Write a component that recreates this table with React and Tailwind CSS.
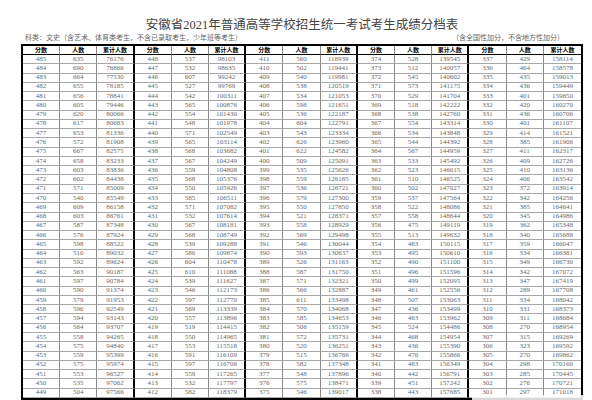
import React from "react";

// counts per score, from 485 down to 301 (5 blocks of 37 rows)
const counts = [
  635, 690, 664, 655, 656, 605, 620, 617, 653, 572, 667, 658, 603, 602, 571, 540, 609, 603, 587, 576, 598, 510, 592, 563, 597, 590, 579, 596, 594, 564, 558, 575, 559, 575, 553, 535, 504,
  537, 532, 607, 527, 542, 565, 554, 548, 571, 565, 568, 567, 559, 568, 550, 585, 571, 532, 567, 568, 539, 586, 604, 610, 539, 546, 597, 569, 557, 519, 550, 553, 591, 597, 559, 532, 582,
  560, 502, 540, 538, 534, 598, 536, 604, 543, 626, 622, 509, 535, 559, 536, 579, 550, 521, 558, 569, 546, 593, 526, 587, 571, 566, 611, 570, 585, 506, 572, 520, 515, 582, 548, 575, 546,
  528, 512, 545, 573, 529, 518, 538, 554, 534, 544, 567, 533, 523, 510, 502, 537, 522, 558, 475, 513, 483, 495, 490, 496, 499, 461, 507, 436, 463, 524, 468, 436, 476, 483, 442, 451, 443,
  429, 464, 435, 436, 401, 420, 436, 401, 414, 385, 411, 409, 410, 406, 372, 342, 385, 345, 362, 340, 359, 334, 349, 342, 347, 289, 334, 331, 311, 270, 315, 323, 270, 298, 285, 276, 297,
];

const ROWS = 37;
const cumulative = [];
counts.reduce((sum, c, i) => {
  cumulative[i] = sum + c;
  return sum + c;
}, 75541);

const headers = ["分数", "人数", "累计人数"];

const Cell = ({ col, children, head }) => {
  const edge =
    col === 14
      ? ""
      : col % 3 === 2
      ? "border-r-2 border-r-black"
      : "border-r border-r-[#8a8a8a]";
  return (
    <div
      className={`${edge} ${
        head ? "border-b border-b-black font-bold text-black" : "border-b border-b-[#a8a8a8] text-[#6a6a6a]"
      } flex items-center justify-center leading-none`}
    >
      {children}
    </div>
  );
};

export default function App() {
  return (
    <div className="relative w-[592px] h-[400px] bg-white overflow-hidden font-['Liberation_Serif','Noto_Sans_CJK_SC',serif]">
      <div className="pt-[17px] pl-[12px] h-[33px] text-center text-[12.5px] leading-[16px] text-[#444]">
        安徽省2021年普通高等学校招生统一考试考生成绩分档表
      </div>
      <div className="flex justify-between pl-[25px] pr-[28px] h-[11px] text-[7px] leading-[9px] text-[#666] font-['Noto_Sans_CJK_SC',sans-serif]">
        <span>科类：文史（含艺术、体育类考生，不含已录取考生，少年班等考生）</span>
        <span>（含全国性加分，不含地方性加分）</span>
      </div>

      <div className="ml-[21px] w-[562px] border-2 border-black">
        <div className="grid grid-cols-[repeat(15,minmax(0,1fr))] h-[9px] text-[6px] font-['Noto_Sans_CJK_SC',sans-serif]">
          {Array.from({ length: 15 }).map((_, col) => (
            <Cell key={col} col={col} head>
              {headers[col % 3]}
            </Cell>
          ))}
        </div>
        {Array.from({ length: ROWS }).map((_, r) => (
          <div
            key={r}
            className="grid grid-cols-[repeat(15,minmax(0,1fr))] h-[9.27px] text-[7px]"
          >
            {[0, 1, 2, 3, 4].map((g) => {
              const i = g * ROWS + r;
              return [
                <Cell key={`${g}-s`} col={g * 3}>{485 - i}</Cell>,
                <Cell key={`${g}-c`} col={g * 3 + 1}>{counts[i]}</Cell>,
                <Cell key={`${g}-t`} col={g * 3 + 2}>{cumulative[i]}</Cell>,
              ];
            })}
          </div>
        ))}
      </div>

      {/* faint watermark strip over the bottom-right corner */}
      <div className="absolute left-[472px] top-[395px] w-[112px] h-[5px] bg-white/85" />
    </div>
  );
}
